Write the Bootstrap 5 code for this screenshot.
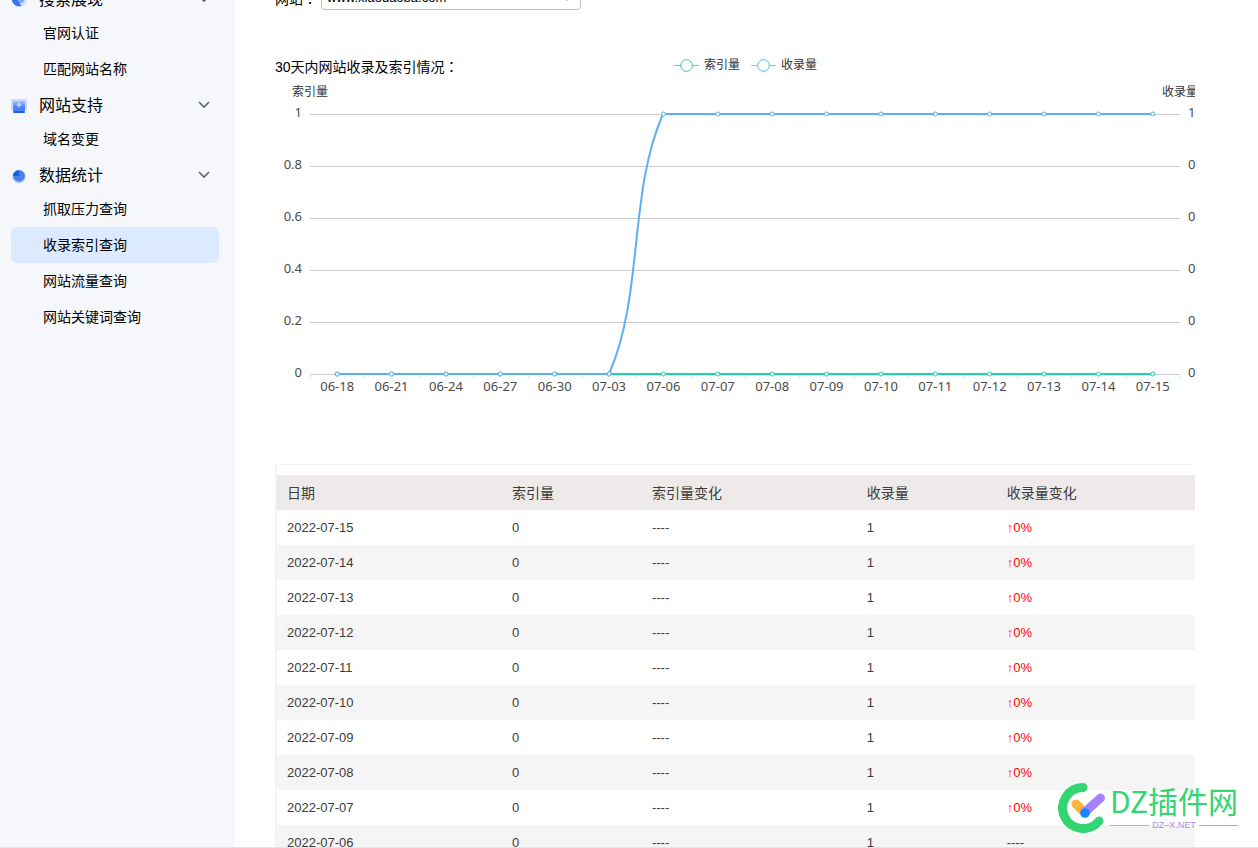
<!DOCTYPE html>
<html lang="zh-CN">
<head>
<meta charset="utf-8">
<meta name="viewport" content="width=device-width, initial-scale=1">
<title>收录索引查询</title>
<link href="https://cdn.jsdelivr.net/npm/bootstrap@5.3.0/dist/css/bootstrap.min.css" rel="stylesheet">
<style>
body{font-family:"Liberation Sans","Noto Sans CJK SC",sans-serif;font-size:14px;line-height:20px;color:#000;background:#fff}
.viewport{border-bottom:1px solid #e5e5e5}
.scrolled{margin-top:-22px}
.side{width:235px;min-height:calc(100vh + 22px);background:#f5f7fb;padding:3px 16px 0 11px}
.group-btn{height:34px;padding:4px 9px 0 0;font-size:16px;color:#000;background:none;border:0}
.group-btn .ico{width:16px;height:16px;margin-right:12px}
.side-link{height:36px;padding-left:32px;color:#000;border-radius:6px}
.side-link.active{background:#dbeafe}
.content{padding:8px 63px 0 40px}
.site-row{height:24px}
.site-row .form-select{width:260px;height:24px;font-size:13px;line-height:18px;padding:1px 5px;border-color:#bfbfbf;border-radius:4px;color:#000;background-size:12px 10px;background-position:right 7px center}
.cn-colon{font-family:"Noto Sans CJK JP",sans-serif}
.chart-head{display:grid;grid-template-columns:1fr auto 1fr;height:24px;margin-top:46px}
.chart-title{font-size:14px;line-height:20px;margin:0;font-weight:400}
.legend-row{margin-left:21px;font-size:12px;color:#333;gap:11px;height:18px}
.legend-row svg{margin-right:5px}
.plot text{font-family:"Noto Sans","Noto Sans CJK SC",sans-serif;font-size:13px;fill:#4a4a4a}
.plot .axis-name{font-family:"Noto Sans CJK SC",sans-serif;font-size:12px;fill:#333}
.table-box{margin-top:64px;border:solid #f3f3f3;border-width:1px 0 0 2px;padding-top:10px}
.stats{table-layout:fixed;font-size:13px;margin:0}
.stats th{font-size:14px;font-weight:400;background:#eeeae9}
.stats th,.stats td{height:35px;padding:0 10px;vertical-align:middle;border:0;color:#3c3c3c}
.stats tbody tr:nth-child(even) td{background:#f5f5f5}
.stats td.up{color:#f00}
.c-date{width:24.5%}.c-num{width:15.25%}.c-diff{width:23.4%}
.brand{right:20px;bottom:14px}
.brand svg{margin-right:2px}
.brand-name{font-family:"Noto Sans CJK SC",sans-serif;font-size:30px;font-weight:400;line-height:30px;margin-bottom:4px;color:#32d572}
.brand-sub{font-size:9px;line-height:12px;color:#a58bf0;gap:3px}
.brand-sub i{flex:1;height:1px;background:#b7a3f3}
</style>
</head>
<body>
<div class="viewport vh-100 overflow-hidden position-relative">
<div class="scrolled d-flex min-vh-100">
  <nav class="side flex-shrink-0">
    <button class="group-btn d-flex align-items-center w-100" type="button">
      <svg class="ico" viewBox="0 0 16 16"><circle cx="9" cy="8" r="7" fill="#cfe0fc"/><path d="M1 6a7 7 0 0 0 9 8L8 8z" fill="#3b74ee"/><circle cx="10" cy="8" r="3" fill="#7ea8f7"/></svg>
      <span>搜索展现</span>
      <svg class="ms-auto" width="12" height="12" viewBox="0 0 12 12" fill="none" stroke="#5b6473" stroke-width="1.6"><path d="M1 2l5 5 5-5"/></svg>
    </button>
    <a class="side-link d-flex align-items-center text-decoration-none" href="#">官网认证</a>
    <a class="side-link d-flex align-items-center text-decoration-none" href="#">匹配网站名称</a>
    <button class="group-btn d-flex align-items-center w-100" type="button">
      <svg class="ico" viewBox="0 0 16 16"><defs><linearGradient id="g1" x2="0" y2="1"><stop stop-color="#a9c6fb"/><stop offset=".6" stop-color="#4a80f4"/></linearGradient></defs><rect y="1" width="16" height="12" rx="1" fill="#c8dbfb"/><rect x="2" y="3" width="12" height="10" rx="1" fill="url(#g1)"/><rect x="2" y="13" width="12" height="2" rx="1" fill="#1f5fe6"/><path d="M8 4.500v5M5.500 7h5" stroke="#d5e4fe" stroke-width="1.2"/></svg>
      <span>网站支持</span>
      <svg class="ms-auto" width="12" height="12" viewBox="0 0 12 12" fill="none" stroke="#5b6473" stroke-width="1.6"><path d="M1 2l5 5 5-5"/></svg>
    </button>
    <a class="side-link d-flex align-items-center text-decoration-none" href="#">域名变更</a>
    <button class="group-btn d-flex align-items-center w-100" type="button">
      <svg class="ico" viewBox="0 0 16 16"><circle cx="8" cy="8.500" r="6.800" fill="#b9d0fb"/><circle cx="8" cy="8" r="5.800" fill="#4a80f2"/><path d="M8 8V2.200a6 6 0 0 0-6 5.800z" fill="#1c5be4"/></svg>
      <span>数据统计</span>
      <svg class="ms-auto" width="12" height="12" viewBox="0 0 12 12" fill="none" stroke="#5b6473" stroke-width="1.6"><path d="M1 2l5 5 5-5"/></svg>
    </button>
    <a class="side-link d-flex align-items-center text-decoration-none" href="#">抓取压力查询</a>
    <a class="side-link active d-flex align-items-center text-decoration-none" href="#" aria-current="page">收录索引查询</a>
    <a class="side-link d-flex align-items-center text-decoration-none" href="#">网站流量查询</a>
    <a class="side-link d-flex align-items-center text-decoration-none" href="#">网站关键词查询</a>
  </nav>

  <main class="content flex-grow-1">
    <div class="site-row d-flex align-items-center">
      <label for="site" class="me-1">网站<span class="cn-colon" lang="ja">：</span></label>
      <select id="site" class="form-select"><option>www.xiaodaoba.com</option></select>
    </div>

    <section>
      <div class="chart-head">
        <h2 class="chart-title">30天内网站收录及索引情况<span class="cn-colon" lang="ja">：</span></h2>
        <div class="legend-row d-flex align-items-center">
          <span class="d-flex align-items-center"><svg width="25" height="14" viewBox="0 0 25 14" fill="#fff" stroke="#19d4ae"><path d="M0 7.500h25" stroke-opacity=".8"/><circle cx="12.500" cy="7.500" r="5.800"/></svg>索引量</span>
          <span class="d-flex align-items-center"><svg width="25" height="14" viewBox="0 0 25 14" fill="#fff" stroke="#5ab1ef"><path d="M0 7.500h25" stroke-opacity=".8"/><circle cx="12.500" cy="7.500" r="5.800"/></svg>收录量</span>
        </div>
      </div>
      <svg class="plot d-block w-100" viewBox="0 0 920 320" role="img" aria-label="索引量 收录量">
        <text class="axis-name" x="35" y="16" text-anchor="middle">索引量</text>
        <text class="axis-name" x="905" y="16" text-anchor="middle">收录量</text>
        <path d="M35 34.500H905M35 86.500H905M35 138.500H905M35 190.500H905M35 242.500H905M35 294.500H905" stroke="#ccc"/>
        <path id="ticks" stroke="#e4e4e4"/>
        <g id="labels"></g>
        <path d="M62 294H878" stroke="#19d4ae" stroke-width="2"/>
        <g id="green" fill="#fff" stroke="#19d4ae"></g>
        <path d="M62 294H334C369 214 353 114 388 34H878" fill="none" stroke="#5ab1ef" stroke-width="2" stroke-linejoin="bevel"/>
        <g id="blue" fill="#fff" stroke="#5ab1ef"></g>
      </svg>
    </section>

    <div class="table-box">
      <table class="table stats w-100">
        <colgroup><col class="c-date"><col class="c-num"><col class="c-diff"><col class="c-num"><col></colgroup>
        <thead><tr><th>日期</th><th>索引量</th><th>索引量变化</th><th>收录量</th><th>收录量变化</th></tr></thead>
        <tbody>
          <tr><td>2022-07-15</td><td>0</td><td>----</td><td>1</td><td class="up">↑0%</td></tr>
          <tr><td>2022-07-14</td><td>0</td><td>----</td><td>1</td><td class="up">↑0%</td></tr>
          <tr><td>2022-07-13</td><td>0</td><td>----</td><td>1</td><td class="up">↑0%</td></tr>
          <tr><td>2022-07-12</td><td>0</td><td>----</td><td>1</td><td class="up">↑0%</td></tr>
          <tr><td>2022-07-11</td><td>0</td><td>----</td><td>1</td><td class="up">↑0%</td></tr>
          <tr><td>2022-07-10</td><td>0</td><td>----</td><td>1</td><td class="up">↑0%</td></tr>
          <tr><td>2022-07-09</td><td>0</td><td>----</td><td>1</td><td class="up">↑0%</td></tr>
          <tr><td>2022-07-08</td><td>0</td><td>----</td><td>1</td><td class="up">↑0%</td></tr>
          <tr><td>2022-07-07</td><td>0</td><td>----</td><td>1</td><td class="up">↑0%</td></tr>
          <tr><td>2022-07-06</td><td>0</td><td>----</td><td>1</td><td>----</td></tr>
        </tbody>
      </table>
    </div>
  </main>
</div>

<div class="brand position-absolute d-flex align-items-center">
  <svg width="50" height="50" viewBox="0 0 50 50" fill="none" stroke-linecap="round">
    <path d="M25 4.500A20.500 20.500 0 1 0 41 38" stroke="#32d572" stroke-width="9"/>
    <path d="M18 21l8 8" stroke="#ffb43c" stroke-width="9"/>
    <path d="M27 29L42.500 15" stroke="#a682ff" stroke-width="9"/>
    <circle cx="27" cy="30" r="4.800" fill="#1486ff"/>
  </svg>
  <div>
    <div class="brand-name">DZ插件网</div>
    <div class="brand-sub d-flex align-items-center"><i></i><span>DZ–X.NET</span><i></i></div>
  </div>
</div>
</div>
<script src="https://cdn.jsdelivr.net/npm/bootstrap@5.3.0/dist/js/bootstrap.bundle.min.js"></script>
<script>
const days = ['06-18','06-21','06-24','06-27','06-30','07-03','07-06','07-07','07-08','07-09','07-10','07-11','07-12','07-13','07-14','07-15'];
const step = 870 / days.length;
let labels = '', green = '', blue = '', ticks = '';
days.forEach((d, i) => {
  const x = 35 + step * (i + 0.5);
  labels += `<text x="${x}" y="311" text-anchor="middle">${d}</text>`;
  green += `<circle cx="${x}" cy="294" r="2"/>`;
  blue += `<circle cx="${x}" cy="${i < 6 ? 294 : 34}" r="2"/>`;
});
for (let i = 0; i <= days.length; i++) ticks += `M${Math.round(35 + step * i) + 0.5} 295v4`;
['1','0.8','0.6','0.4','0.2','0'].forEach((v, i) => {
  labels += `<text x="27" y="${37 + i * 52}" text-anchor="end">${v}</text>`;
  labels += `<text x="913" y="${37 + i * 52}">${i ? 0 : 1}</text>`;
});
document.getElementById('labels').innerHTML = labels;
document.getElementById('green').innerHTML = green;
document.getElementById('blue').innerHTML = blue;
document.getElementById('ticks').setAttribute('d', ticks);
</script>
</body>
</html>
